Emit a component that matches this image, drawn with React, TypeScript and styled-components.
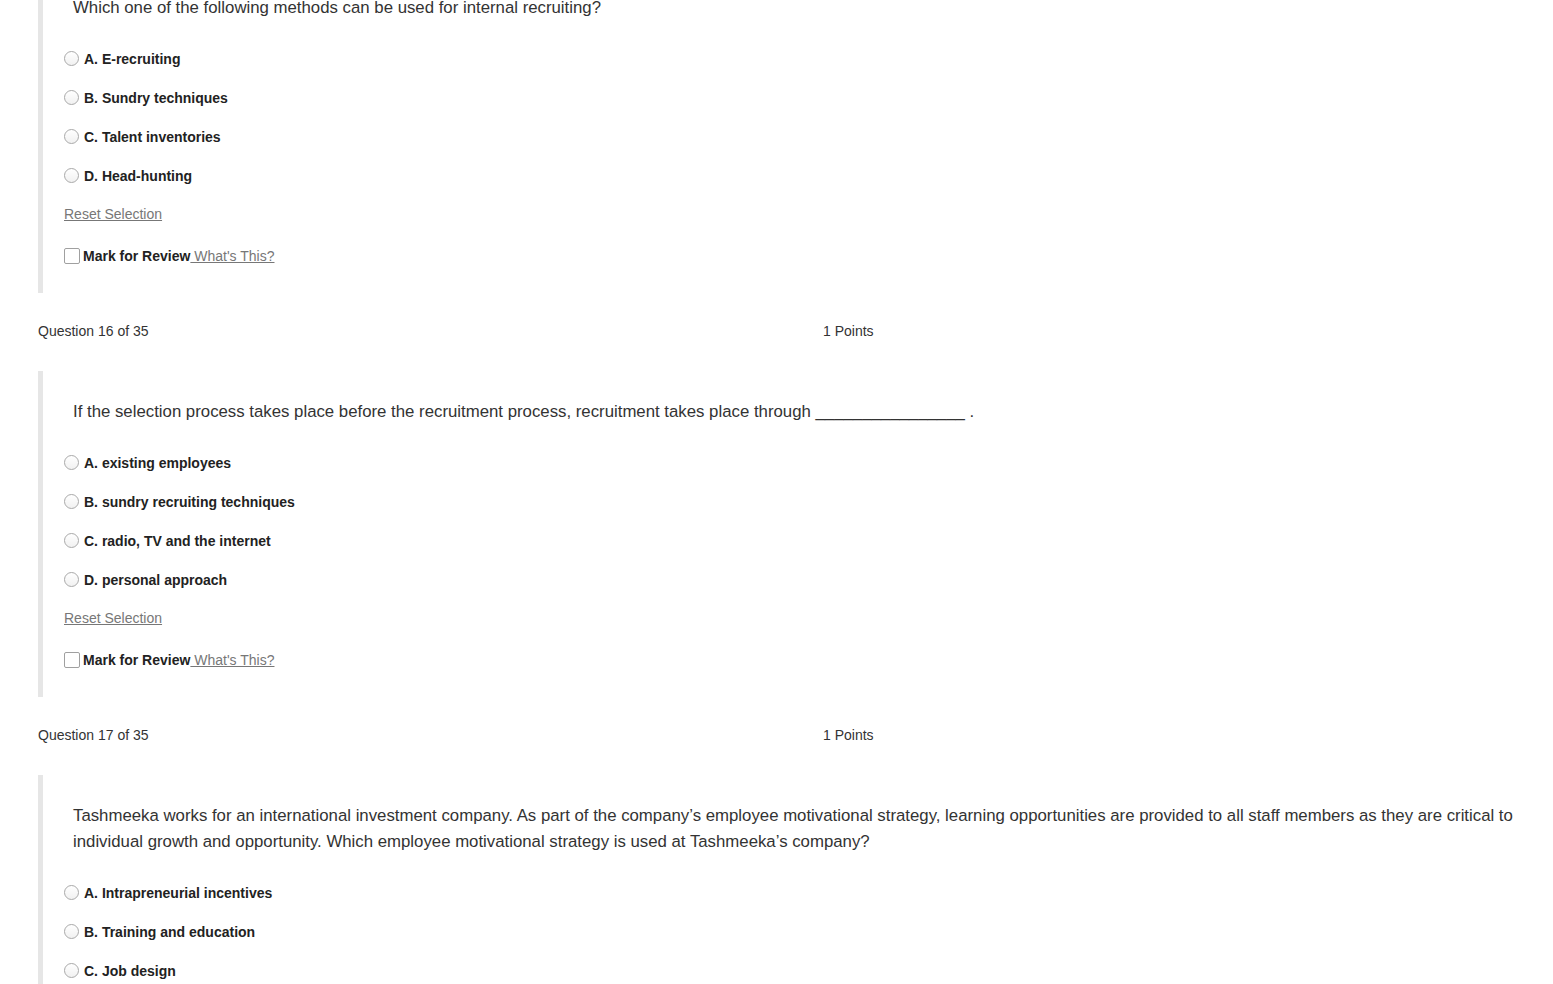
import React from "react";
import styled, { createGlobalStyle } from "styled-components";

const GlobalStyle = createGlobalStyle`
  html, body {
    margin: 0;
    padding: 0;
    background: #ffffff;
    font-family: "Liberation Sans", Arial, sans-serif;
    color: #333333;
  }
`;

const Page = styled.div`
  margin-top: -33px;
  padding: 0 23px 0 38px;
  box-sizing: border-box;
  width: 1553px;
  height: 1017px;
  overflow: hidden;
`;

const QuestionBlock = styled.section`
  border-left: 5px solid #e6e6e6;
  padding: 28px 0 28px 21px;
`;

const QuestionText = styled.p`
  margin: 0 0 0 9px;
  font-size: 16.8px;
  line-height: 26px;
  color: #333333;
`;

const OptionList = styled.div`
  margin-top: 18px;
  display: flex;
  flex-direction: column;
`;

const OptionRow = styled.label`
  height: 39px;
  display: flex;
  align-items: center;
  gap: 5px;
  font-size: 14px;
  font-weight: bold;
  color: #222222;
`;

const Radio = styled.span`
  width: 13px;
  height: 13px;
  border-radius: 50%;
  border: 1px solid #a9a9a9;
  background: linear-gradient(#ffffff, #f1f1f1);
  flex: none;
`;

const ResetLink = styled.a`
  display: block;
  margin-top: 10px;
  line-height: 18px;
  font-size: 14px;
  color: #777777;
  text-decoration: underline;
  width: fit-content;
`;

const ReviewRow = styled.div`
  margin-top: 24px;
  height: 18px;
  display: flex;
  align-items: center;
  gap: 3px;
  font-size: 14px;
`;

const Checkbox = styled.span`
  width: 14px;
  height: 14px;
  border: 1px solid #a0a0a0;
  border-radius: 2px;
  background: #ffffff;
  flex: none;
`;

const ReviewLabel = styled.span`
  font-weight: bold;
  color: #222222;
  white-space: pre;
`;

const HelpLink = styled.a`
  color: #777777;
  text-decoration: underline;
  white-space: pre;
  margin-left: -3px;
`;

const QuestionHeader = styled.div`
  display: grid;
  grid-template-columns: 785px auto;
  margin: 29px 0 31px;
  line-height: 18px;
  font-size: 14px;
  color: #333333;
`;

type Q = {
  number?: number;
  text: React.ReactNode;
  options: string[];
  controls: boolean;
};

const questions: Q[] = [
  {
    text: "Which one of the following methods can be used for internal recruiting?",
    options: ["A. E-recruiting", "B. Sundry techniques", "C. Talent inventories", "D. Head-hunting"],
    controls: true,
  },
  {
    number: 16,
    text: "If the selection process takes place before the recruitment process, recruitment takes place through ________________ .",
    options: [
      "A. existing employees",
      "B. sundry recruiting techniques",
      "C. radio, TV and the internet",
      "D. personal approach",
    ],
    controls: true,
  },
  {
    number: 17,
    text: "Tashmeeka works for an international investment company. As part of the company\u2019s employee motivational strategy, learning opportunities are provided to all staff members as they are critical to individual growth and opportunity. Which employee motivational strategy is used at Tashmeeka\u2019s company?",
    options: ["A. Intrapreneurial incentives", "B. Training and education", "C. Job design"],
    controls: false,
  },
];

function Question({ q }: { q: Q }) {
  return (
    <>
      {q.number !== undefined && (
        <QuestionHeader>
          <span>Question {q.number} of 35</span>
          <span>1 Points</span>
        </QuestionHeader>
      )}
      <QuestionBlock>
        <QuestionText>{q.text}</QuestionText>
        <OptionList>
          {q.options.map((o) => (
            <OptionRow key={o}>
              <Radio />
              <span>{o}</span>
            </OptionRow>
          ))}
        </OptionList>
        {q.controls && (
          <>
            <ResetLink>Reset Selection</ResetLink>
            <ReviewRow>
              <Checkbox />
              <ReviewLabel>Mark for Review</ReviewLabel>
              <HelpLink> What's This?</HelpLink>
            </ReviewRow>
          </>
        )}
      </QuestionBlock>
    </>
  );
}

export default function App() {
  return (
    <>
      <GlobalStyle />
      <Page>
        {questions.map((q, i) => (
          <Question key={i} q={q} />
        ))}
      </Page>
    </>
  );
}
